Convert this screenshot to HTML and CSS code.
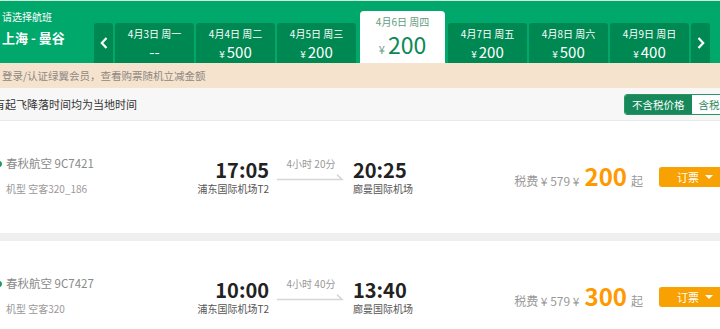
FILE: index.html
```html
<!DOCTYPE html>
<html lang="zh-CN">
<head>
  <meta charset="UTF-8">
  <meta name="viewport" content="width=device-width, initial-scale=1.0">
  <title>选择航班</title>
<link rel="stylesheet" href="styles.css">
</head>
<body>
  <div class="page">
    <div class="header">
      <div class="route">
        <div class="route-tip">请选择航班</div>
        <div class="route-name">上海 - 曼谷</div>
      </div>
      <div class="dates">
        <a class="date-arrow">
          <svg width="8" height="12" viewBox="0 0 8 12"><polyline points="6.5,1 1.8,6 6.5,11" fill="none" stroke="#fff" stroke-width="2.2"/></svg>
        </a>
        <div class="date-tab"><div class="date">4月3日 周一</div><div class="price">--</div></div>
        <div class="date-tab"><div class="date">4月4日 周二</div><div class="price"><small>¥</small>500</div></div>
        <div class="date-tab"><div class="date">4月5日 周三</div><div class="price"><small>¥</small>200</div></div>
        <div class="date-tab active"><div class="date">4月6日 周四</div><div class="price"><small>¥</small>200</div></div>
        <div class="date-tab"><div class="date">4月7日 周五</div><div class="price"><small>¥</small>200</div></div>
        <div class="date-tab"><div class="date">4月8日 周六</div><div class="price"><small>¥</small>500</div></div>
        <div class="date-tab"><div class="date">4月9日 周日</div><div class="price"><small>¥</small>400</div></div>
        <a class="date-arrow">
          <svg width="8" height="12" viewBox="0 0 8 12"><polyline points="1.5,1 6.2,6 1.5,11" fill="none" stroke="#fff" stroke-width="2.2"/></svg>
        </a>
      </div>
    </div>

    <div class="notice">登录/认证绿翼会员，查看购票随机立减金额</div>

    <div class="filter">
      <span class="filter-tip">所有起飞降落时间均为当地时间</span>
      <div class="tax-switch">
        <span class="on">不含税价格</span>
        <span>含税价格</span>
      </div>
    </div>

    <div class="flight">
      <div class="info">
        <div class="airline"><i class="logo"></i>春秋航空 9C7421</div>
        <div class="plane">机型 空客320_186</div>
      </div>
      <div class="dep">
        <div class="time">17:05</div>
        <div class="airport">浦东国际机场T2</div>
      </div>
      <div class="duration">
        <div class="cost">4小时 20分</div>
        <svg width="68" height="8" viewBox="0 0 68 8"><path d="M0 6.5 H65 L60 1.5" fill="none" stroke="#d6d6d6" stroke-width="1.6"/></svg>
      </div>
      <div class="arr">
        <div class="time">20:25</div>
        <div class="airport">廊曼国际机场</div>
      </div>
      <div class="fare">
        <span class="tax">税费 ¥ 579 ¥</span>
        <span class="num">200</span>
        <span class="qi">起</span>
      </div>
      <a class="book">订票<i class="caret"></i></a>
    </div>

    <div class="flight">
      <div class="info">
        <div class="airline"><i class="logo"></i>春秋航空 9C7427</div>
        <div class="plane">机型 空客320</div>
      </div>
      <div class="dep">
        <div class="time">10:00</div>
        <div class="airport">浦东国际机场T2</div>
      </div>
      <div class="duration">
        <div class="cost">4小时 40分</div>
        <svg width="68" height="8" viewBox="0 0 68 8"><path d="M0 6.5 H65 L60 1.5" fill="none" stroke="#d6d6d6" stroke-width="1.6"/></svg>
      </div>
      <div class="arr">
        <div class="time">13:40</div>
        <div class="airport">廊曼国际机场</div>
      </div>
      <div class="fare">
        <span class="tax">税费 ¥ 579 ¥</span>
        <span class="num">300</span>
        <span class="qi">起</span>
      </div>
      <a class="book">订票<i class="caret"></i></a>
    </div>
  </div>
</body>
</html>
```

FILE: styles.css
```css
html, body {
  margin: 0;
  padding: 0;
  overflow: hidden;
  background: #efefef;
}
body {
  font-family: "Microsoft YaHei", "Noto Sans CJK SC", sans-serif;
  color: #333;
}
.page {
  width: 760px;
}

/* 顶部日期栏 */
.header {
  height: 62px;
  display: flex;
  align-items: flex-end;
  background: #00a96b;
  border-top: 1px solid #cfeadc;
}
.route {
  width: 92px;
  align-self: flex-start;
  padding: 9px 0 0 2px;
  color: #fff;
}
.route-tip {
  font-size: 10px;
  line-height: 14px;
}
.route-name {
  margin-top: 5px;
  font-size: 13px;
  line-height: 18px;
  font-weight: bold;
}
.dates {
  display: flex;
  align-items: flex-end;
  gap: 2px;
}
.date-arrow {
  width: 19px;
  height: 40px;
  display: flex;
  align-items: center;
  justify-content: center;
  background: #008852;
  border-radius: 3px 3px 0 0;
}
.date-tab {
  width: 79px;
  height: 40px;
  box-sizing: border-box;
  padding-top: 4px;
  text-align: center;
  color: #fff;
  background: #008852;
  border-radius: 3px 3px 0 0;
}
.date-tab .date {
  font-size: 10px;
  line-height: 14px;
}
.date-tab .price {
  margin-top: 2px;
  font-size: 15px;
  line-height: 18px;
}
.date-tab small {
  font-size: 10px;
  margin-right: 2px;
}
.date-tab.active {
  width: 85px;
  height: 52px;
  margin: 0 1px 0 2px;
  background: #fff;
  border-radius: 4px 4px 0 0;
}
.date-tab.active .date {
  color: #5f9c80;
}
.date-tab.active .price {
  margin-top: 1px;
  font-size: 23px;
  line-height: 28px;
  color: #0a8956;
}
.date-tab.active small {
  font-size: 11px;
  color: #5f9c80;
  margin-right: 3px;
}

/* 会员提示 */
.notice {
  height: 25px;
  line-height: 25px;
  padding-left: 2px;
  font-size: 10.5px;
  color: #8d8884;
  background: #f6e3ce;
}

/* 税价切换 */
.filter {
  height: 32px;
  display: flex;
  align-items: center;
  background: #f7f7f7;
  border-bottom: 1px solid #e9e9e9;
}
.filter-tip {
  flex: 0 0 641px;
  margin-left: -17px;
  font-size: 11px;
  color: #333;
}
.tax-switch {
  display: flex;
  height: 21px;
  box-sizing: border-box;
  border: 1px solid #2a9466;
  border-radius: 3px;
  background: #fff;
  font-size: 10.5px;
  line-height: 19px;
}
.tax-switch span {
  padding: 0 7px;
  color: #2f8a5f;
}
.tax-switch .on {
  color: #fff;
  background: #17885a;
  border-radius: 2px 0 0 2px;
}

/* 航班列表 */
.flight {
  height: 112px;
  display: flex;
  align-items: flex-start;
  background: #fff;
  margin-bottom: 8px;
}
.info {
  width: 154px;
  margin: 34px 0 0 -4px;
}
.airline {
  display: flex;
  align-items: center;
  font-size: 11.5px;
  line-height: 16px;
  color: #8a8a8a;
}
.logo {
  width: 6px;
  height: 6px;
  margin: 2px 4px 0 0;
  border-radius: 50%;
  background: #1a9a63;
}
.plane {
  margin: 11px 0 0 10px;
  font-size: 10px;
  line-height: 14px;
  color: #999;
}
.dep, .arr {
  margin-top: 37px;
}
.dep {
  width: 119px;
  text-align: right;
}
.arr {
  width: 100px;
  margin-left: 8px;
}
.time {
  font-size: 20px;
  line-height: 23px;
  font-weight: bold;
  color: #222;
}
.airport {
  margin-top: 1px;
  font-size: 10px;
  line-height: 14px;
  color: #555;
}
.duration {
  width: 68px;
  margin: 36px 0 0 8px;
  text-align: center;
}
.cost {
  font-size: 10px;
  line-height: 14px;
  color: #999;
}
.duration svg {
  display: block;
  margin-top: 2px;
}
.fare {
  width: 190px;
  margin-top: 41px;
  display: flex;
  justify-content: flex-end;
  align-items: baseline;
  line-height: 28px;
}
.tax {
  font-size: 12px;
  color: #999;
}
.num {
  margin: 0 4px 0 5px;
  font-size: 24px;
  font-weight: bold;
  color: #f90;
}
.qi {
  font-size: 12px;
  color: #999;
}
.book {
  width: 72px;
  height: 20px;
  margin: 46px 0 0 16px;
  box-sizing: border-box;
  padding-left: 18px;
  display: flex;
  align-items: center;
  font-size: 11px;
  color: #fff;
  background: #f8a102;
  border-radius: 3px;
}
.caret {
  margin-left: 6px;
  border-left: 4px solid transparent;
  border-right: 4px solid transparent;
  border-top: 4px solid #fff;
}
```
